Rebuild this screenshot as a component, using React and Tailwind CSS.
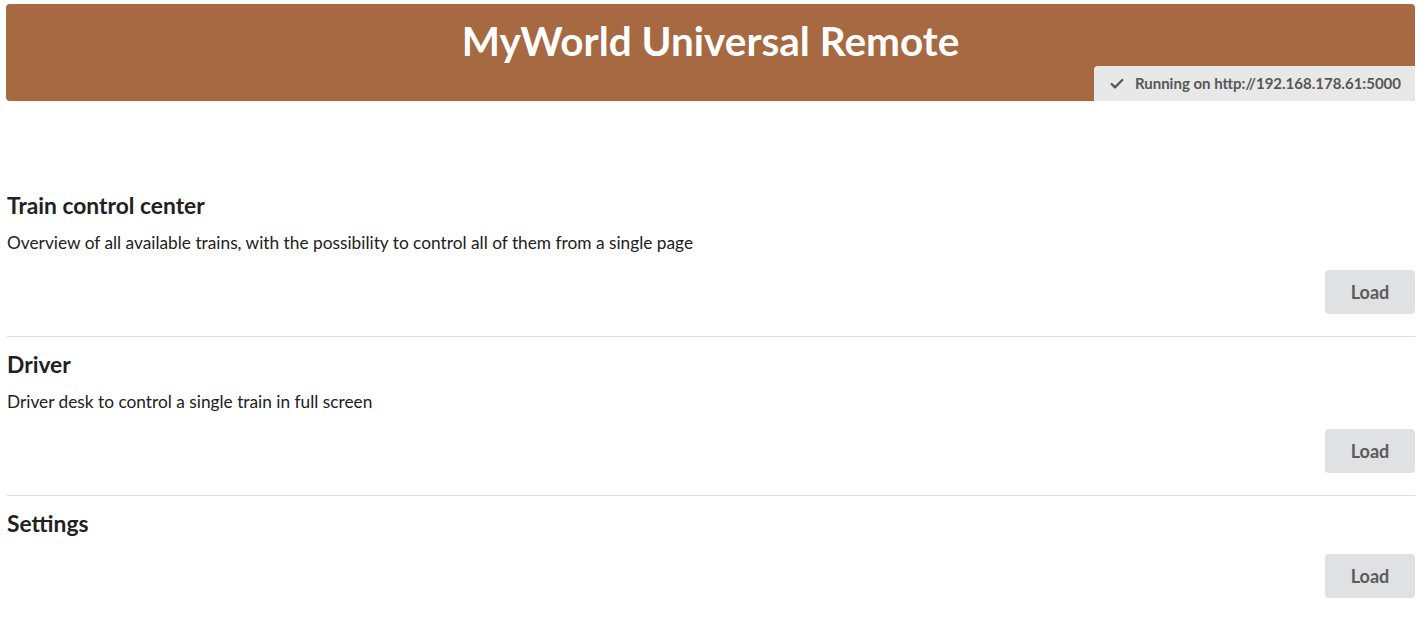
import { Check } from 'lucide-react';

const pages = [
  {
    title: 'Train control center',
    description: 'Overview of all available trains, with the possibility to control all of them from a single page',
  },
  {
    title: 'Driver',
    description: 'Driver desk to control a single train in full screen',
  },
  {
    title: 'Settings',
    description: '',
  },
];

export default function App() {
  return (
    <div className="min-h-screen bg-white font-['Lato',sans-serif] text-[#212121]">
      <div className="pt-[4px] pl-[6px] pr-[11px]">
        <div className="relative h-[97px] rounded-[4px] bg-[#a66941]">
          <h1 className="pt-[13px] text-center text-[40.5px] font-bold leading-[48px] text-white">
            MyWorld Universal Remote
          </h1>
          <div className="absolute bottom-0 right-0 flex h-[35px] items-center gap-[10px] rounded-tl-[4px] rounded-br-[4px] bg-[#e8e8e8] pl-[15px] pr-[14px] text-[15px] font-bold text-[#575757]">
            <Check className="h-[16px] w-[16px]" strokeWidth={3.5} />
            <span>Running on http://192.168.178.61:5000</span>
          </div>
        </div>
      </div>

      <div className="pl-[7px] pr-[11px] pt-[90px]">
        {pages.map((page, i) => (
          <div key={page.title} className={i < pages.length - 1 ? 'border-b border-[#dedede] pb-[22px] mb-[13px]' : ''}>
            <h3 className="text-[22.8px] font-bold leading-[28px]">{page.title}</h3>
            {page.description && (
              <p className="mt-[12px] text-[17.3px] leading-[24px]">{page.description}</p>
            )}
            <div className={`flex justify-end ${page.description ? 'mt-[15px]' : 'mt-[17px]'}`}>
              <button className="h-[44px] w-[90px] rounded-[4px] bg-[#e0e1e2] text-[18px] font-bold text-[#5c5c5c]">
                Load
              </button>
            </div>
          </div>
        ))}
      </div>
    </div>
  );
}
